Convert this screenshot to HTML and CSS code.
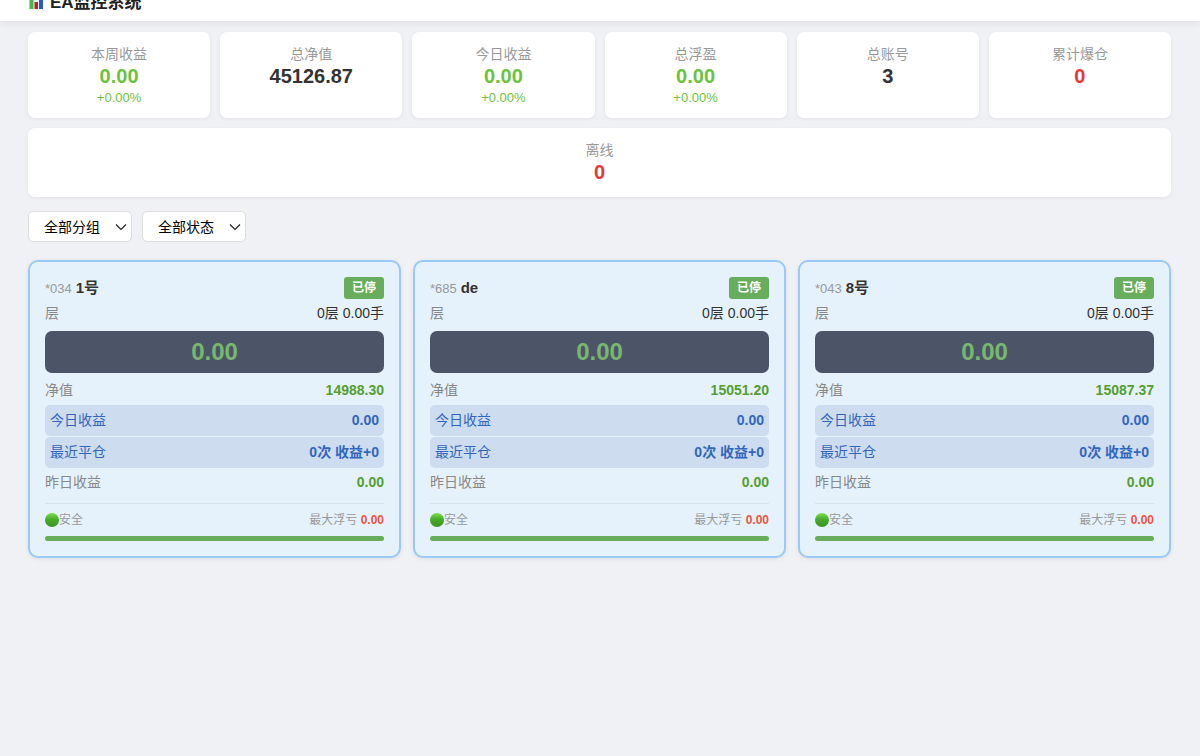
FILE: index.html
```
<!DOCTYPE html>
<html lang="zh-CN">
<head>
	<meta charset="UTF-8">
	<meta name="viewport" content="width=device-width, initial-scale=1.0">
	<title>EA监控系统</title>
	<link rel="stylesheet" href="styles.css">
</head>
<body>
	<header class="header">
		<h1 class="title">
			<svg class="logo" width="16" height="16" viewBox="0 0 16 16" aria-hidden="true">
				<rect x="0.5" y="0" width="15" height="16" fill="#f1f4f8"/>
				<rect x="1.5" y="2" width="4" height="12" fill="#4cb848"/>
				<rect x="6.5" y="7" width="3.5" height="7" fill="#b3262b"/>
				<rect x="11" y="1" width="4" height="13" fill="#2c5cb8"/>
			</svg>
			EA监控系统
		</h1>
	</header>

	<main class="container">
		<section class="summary">
			<div class="summary-card">
				<div class="summary-label">本周收益</div>
				<div class="summary-value green">0.00</div>
				<div class="summary-sub green">+0.00%</div>
			</div>
			<div class="summary-card">
				<div class="summary-label">总净值</div>
				<div class="summary-value">45126.87</div>
			</div>
			<div class="summary-card">
				<div class="summary-label">今日收益</div>
				<div class="summary-value green">0.00</div>
				<div class="summary-sub green">+0.00%</div>
			</div>
			<div class="summary-card">
				<div class="summary-label">总浮盈</div>
				<div class="summary-value green">0.00</div>
				<div class="summary-sub green">+0.00%</div>
			</div>
			<div class="summary-card">
				<div class="summary-label">总账号</div>
				<div class="summary-value">3</div>
			</div>
			<div class="summary-card">
				<div class="summary-label">累计爆仓</div>
				<div class="summary-value red">0</div>
			</div>
			<div class="summary-card wide">
				<div class="summary-label">离线</div>
				<div class="summary-value red">0</div>
			</div>
		</section>

		<div class="filters">
			<select class="filter" id="group" aria-label="分组">
				<option>全部分组</option>
			</select>
			<select class="filter" id="status" aria-label="状态">
				<option>全部状态</option>
			</select>
		</div>

		<section class="accounts">
			<article class="account">
				<div class="account-head">
					<div><span class="account-id">*034</span> <span class="account-name">1号</span></div>
					<span class="badge">已停</span>
				</div>
				<div class="row"><span>层</span><span class="lots">0层 0.00手</span></div>
				<div class="profit">0.00</div>
				<div class="row"><span>净值</span><span class="amount">14988.30</span></div>
				<div class="row highlight"><span>今日收益</span><strong>0.00</strong></div>
				<div class="row highlight"><span>最近平仓</span><strong>0次 收益+0</strong></div>
				<div class="row"><span>昨日收益</span><span class="amount">0.00</span></div>
				<div class="risk">
					<span class="risk-state"><i class="dot"></i>安全</span>
					<span>最大浮亏 <strong class="loss">0.00</strong></span>
				</div>
				<div class="risk-bar"></div>
			</article>

			<article class="account">
				<div class="account-head">
					<div><span class="account-id">*685</span> <span class="account-name">de</span></div>
					<span class="badge">已停</span>
				</div>
				<div class="row"><span>层</span><span class="lots">0层 0.00手</span></div>
				<div class="profit">0.00</div>
				<div class="row"><span>净值</span><span class="amount">15051.20</span></div>
				<div class="row highlight"><span>今日收益</span><strong>0.00</strong></div>
				<div class="row highlight"><span>最近平仓</span><strong>0次 收益+0</strong></div>
				<div class="row"><span>昨日收益</span><span class="amount">0.00</span></div>
				<div class="risk">
					<span class="risk-state"><i class="dot"></i>安全</span>
					<span>最大浮亏 <strong class="loss">0.00</strong></span>
				</div>
				<div class="risk-bar"></div>
			</article>

			<article class="account">
				<div class="account-head">
					<div><span class="account-id">*043</span> <span class="account-name">8号</span></div>
					<span class="badge">已停</span>
				</div>
				<div class="row"><span>层</span><span class="lots">0层 0.00手</span></div>
				<div class="profit">0.00</div>
				<div class="row"><span>净值</span><span class="amount">15087.37</span></div>
				<div class="row highlight"><span>今日收益</span><strong>0.00</strong></div>
				<div class="row highlight"><span>最近平仓</span><strong>0次 收益+0</strong></div>
				<div class="row"><span>昨日收益</span><span class="amount">0.00</span></div>
				<div class="risk">
					<span class="risk-state"><i class="dot"></i>安全</span>
					<span>最大浮亏 <strong class="loss">0.00</strong></span>
				</div>
				<div class="risk-bar"></div>
			</article>
		</section>
	</main>
</body>
</html>
```
FILE: styles.css
```
* {
  box-sizing: border-box;
}

body {
  margin: 0;
  background-color: #f0f1f5;
  color: #333;
  font-family: "Liberation Sans", "Noto Sans CJK SC", sans-serif;
  font-size: 14px;
  line-height: 21px;
}

/* header is partly scrolled out of view */
.header {
  margin-top: -15px;
  padding: 6px 28px;
  background-color: #fff;
  box-shadow: 0 2px 8px rgba(0,0,0,0.08);
}

.title {
  display: flex;
  align-items: center;
  gap: 6px;
  margin: 0;
  font-size: 17px;
  line-height: 24px;
  color: #222;
}

.container {
  padding: 11px 29px 11px 28px;
}

.summary {
  display: grid;
  grid-template-columns: repeat(6, 1fr);
  gap: 10px;
}

.summary-card {
  padding: 12px;
  background-color: #fff;
  border-radius: 7px;
  box-shadow: 0 1px 4px rgba(0,0,0,0.06);
  text-align: center;
}

.wide {
  grid-column: 1 / -1;
}

.summary-label {
  color: #999;
  line-height: 20px;
}

.summary-value {
  font-size: 20px;
  font-weight: bold;
  line-height: 25px;
}

.summary-sub {
  font-size: 13px;
  line-height: 17px;
}

.green {
  color: #6cc23c;
}

.red {
  color: #e53935;
}

.filters {
  display: flex;
  gap: 10px;
  margin: 14px 0 18px;
}

.filter {
  width: 104px;
  height: 31px;
  padding: 0 28px 0 15px;
  border: 1px solid #ddd;
  border-radius: 5px;
  background: #fff url("data:image/svg+xml,%3Csvg xmlns='http://www.w3.org/2000/svg' width='12' height='8' viewBox='0 0 12 8'%3E%3Cpath d='M1 1.5l5 5 5-5' fill='none' stroke='%23222' stroke-width='1.2'/%3E%3C/svg%3E") no-repeat right 4px center;
  appearance: none;
  color: #000;
  font-family: inherit;
  font-size: 14px;
}

.accounts {
  display: grid;
  grid-template-columns: repeat(3, 1fr);
  gap: 12px;
}

.account {
  padding: 15px;
  background-color: #e5f2fc;
  border: 2px solid #9ac8f7;
  border-radius: 10px;
  box-shadow: 0 1px 4px rgba(0,0,0,0.08);
}

.account-head,
.row,
.risk {
  display: flex;
  align-items: center;
  justify-content: space-between;
}

.account-id {
  color: #999;
  font-size: 13px;
}

.account-name {
  font-size: 15px;
  font-weight: bold;
}

.badge {
  padding: 0 8px;
  background-color: #67ad5b;
  border-radius: 3px;
  color: #fff;
  font-size: 12px;
  font-weight: bold;
  line-height: 22px;
}

.row {
  padding: 4px 0;
  color: #888;
}

.lots {
  color: #333;
}

.amount {
  color: #559e2f;
  font-weight: bold;
}

.profit {
  margin: 3px 0;
  background-color: #4c5568;
  border-radius: 7px;
  color: #78b76e;
  font-size: 24px;
  font-weight: bold;
  line-height: 42px;
  text-align: center;
}

.highlight {
  padding: 5px;
  background-color: #cedcf0;
  border-radius: 5px;
  color: #3166bd;
}

.highlight + .highlight {
  margin-top: 1px;
}

.risk {
  margin-top: 6px;
  padding: 6px 0;
  border-top: 1px solid #d5e2ec;
  color: #999;
  font-size: 12px;
  line-height: 20px;
}

.risk-state {
  display: flex;
  align-items: center;
}

.dot {
  width: 14px;
  height: 14px;
  border-radius: 50%;
  background: linear-gradient(#7be04f, #46ad2a 45%, #3a9420);
}

.loss {
  color: #ee5340;
}

.risk-bar {
  height: 5px;
  background-color: #67ad5b;
  border-radius: 3px;
}
```
